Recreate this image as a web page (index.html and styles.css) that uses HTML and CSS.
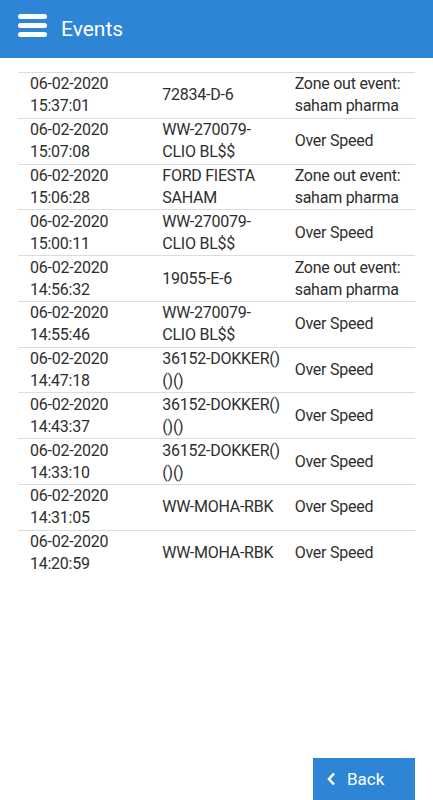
FILE: index.html
```html
<!DOCTYPE html>
<html lang="en">
<head>
  <meta charset="UTF-8">
  <meta name="viewport" content="width=device-width, initial-scale=1.0">
  <title>Events</title>
  <link rel="stylesheet" href="styles.css">
</head>
<body>
  <div class="page">
    <header class="topbar">
      <svg class="menu-icon" width="30" height="24" viewBox="0 0 30 24">
        <rect x="0" y="0" width="29" height="5" rx="2.5" fill="#fff"/>
        <rect x="0" y="9" width="29" height="5" rx="2.5" fill="#fff"/>
        <rect x="0" y="18" width="29" height="5" rx="2.5" fill="#fff"/>
      </svg>
      <h1 class="title">Events</h1>
    </header>

    <main class="content">
      <table class="events">
        <tr><td>06-02-2020<br>15:37:01</td><td>72834-D-6</td><td>Zone out event: saham pharma</td></tr>
        <tr><td>06-02-2020<br>15:07:08</td><td>WW-270079-CLIO BL$$</td><td>Over Speed</td></tr>
        <tr><td>06-02-2020<br>15:06:28</td><td>FORD FIESTA SAHAM</td><td>Zone out event: saham pharma</td></tr>
        <tr><td>06-02-2020<br>15:00:11</td><td>WW-270079-CLIO BL$$</td><td>Over Speed</td></tr>
        <tr><td>06-02-2020<br>14:56:32</td><td>19055-E-6</td><td>Zone out event: saham pharma</td></tr>
        <tr><td>06-02-2020<br>14:55:46</td><td>WW-270079-CLIO BL$$</td><td>Over Speed</td></tr>
        <tr><td>06-02-2020<br>14:47:18</td><td>36152-DOKKER()<wbr>()()</td><td>Over Speed</td></tr>
        <tr><td>06-02-2020<br>14:43:37</td><td>36152-DOKKER()<wbr>()()</td><td>Over Speed</td></tr>
        <tr><td>06-02-2020<br>14:33:10</td><td>36152-DOKKER()<wbr>()()</td><td>Over Speed</td></tr>
        <tr><td>06-02-2020<br>14:31:05</td><td>WW-MOHA-RBK</td><td>Over Speed</td></tr>
        <tr><td>06-02-2020<br>14:20:59</td><td>WW-MOHA-RBK</td><td>Over Speed</td></tr>
      </table>
    </main>

    <footer class="footer">
      <button class="back-btn" type="button">
        <svg class="chevron" width="9" height="14" viewBox="0 0 9 14">
          <path d="M7 1.5 L2 7 L7 12.5" fill="none" stroke="#fff" stroke-width="2.6"/>
        </svg>
        Back
      </button>
    </footer>
  </div>
</body>
</html>
```

FILE: styles.css
```css
html, body {
  margin: 0;
  padding: 0;
  background: #fff;
}
body {
  font-family: Roboto, "Liberation Sans", Arial, sans-serif;
  color: #2e2e2e;
}
.page {
  display: flex;
  flex-direction: column;
  height: 100vh;
}
.topbar {
  display: flex;
  align-items: center;
  height: 58px;
  padding: 0 18px;
  background-color: #2e85d6;
  color: #fff;
  flex-shrink: 0;
}
.menu-icon {
  display: block;
  margin-top: -6px;
}
.title {
  margin: 0 0 0 13px;
  font-size: 21px;
  font-weight: 400;
}
.content {
  flex: 1;
  padding: 14px 18px 0;
}
.events {
  width: 100%;
  table-layout: fixed;
  border-collapse: collapse;
  font-size: 16px;
  line-height: 22px;
  letter-spacing: -0.25px;
}
.events tr {
  border-top: 1px solid #dcdcdc;
}
/* only a left gutter, so long plates wrap like the app does */
.events td {
  padding: 0.4px 0 0.4px 12px;
  vertical-align: middle;
}
.footer {
  display: flex;
  justify-content: flex-end;
  padding: 0 18px;
}
.back-btn {
  display: flex;
  align-items: center;
  width: 102px;
  height: 42px;
  padding: 0 0 0 14px;
  border: none;
  background-color: #2e85d6;
  color: #fff;
  font-family: inherit;
  font-size: 17px;
}
.chevron {
  margin-right: 11px;
}
```
